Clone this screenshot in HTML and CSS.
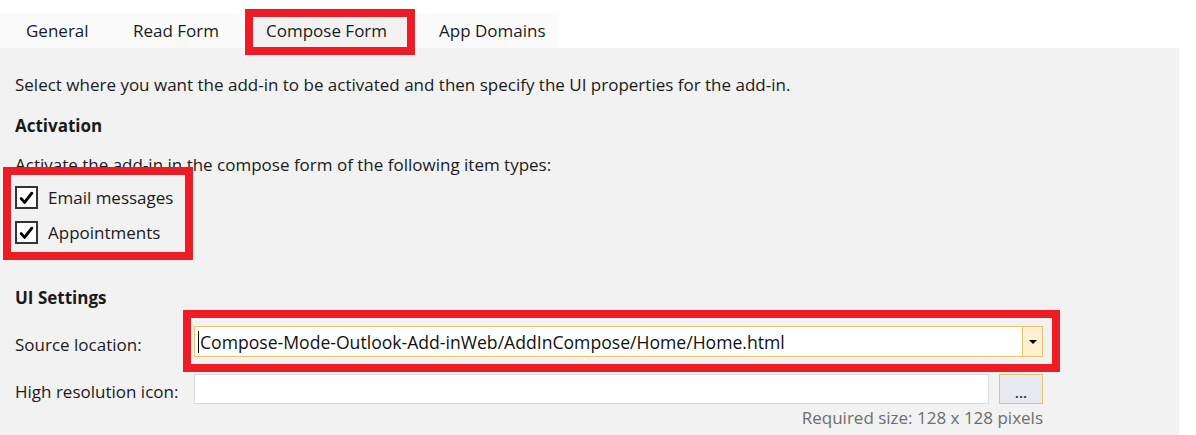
FILE: index.html
```html
<!DOCTYPE html>
<html>
<head>
<meta charset="utf-8">
<link rel="stylesheet" href="styles.css">
</head>
<body>
<div class="window">
  <div class="tabs">
    <div class="tab tab-general">General</div>
    <div class="tab tab-read">Read Form</div>
    <div class="tab tab-active">Compose Form</div>
    <div class="tab tab-domains">App Domains</div>
  </div>
  <div class="panel">
    <p class="intro">Select where you want the add-in to be activated and then specify the UI properties for the add-in.</p>
    <h3 class="heading heading-activation">Activation</h3>
    <p class="desc">Activate the add-in in the compose form of the following item types:</p>
    <div class="checks">
      <label class="check"><span class="box"><svg width="15" height="14" viewBox="0 0 15 14"><path d="M2.2 7.6 L5.6 11.4 L12.8 2.2" fill="none" stroke="#000" stroke-width="2.9" stroke-linecap="round" stroke-linejoin="round"/></svg></span>Email messages</label>
      <label class="check"><span class="box"><svg width="15" height="14" viewBox="0 0 15 14"><path d="M2.2 7.6 L5.6 11.4 L12.8 2.2" fill="none" stroke="#000" stroke-width="2.9" stroke-linecap="round" stroke-linejoin="round"/></svg></span>Appointments</label>
    </div>
    <h3 class="heading heading-ui">UI Settings</h3>
    <div class="form">
      <div class="label">Source location:</div>
      <div class="combo">
        <div class="combo-text"><span class="caret"></span>Compose-Mode-Outlook-Add-inWeb/AddInCompose/Home/Home.html</div>
        <div class="combo-btn"><span class="arrow"></span></div>
      </div>
      <div class="label label-icon">High resolution icon:</div>
      <div class="file-row">
        <div class="file-input"></div>
        <div class="browse">...</div>
      </div>
      <div></div>
      <div class="hint">Required size: 128 x 128 pixels</div>
    </div>
  </div>
</div>
</body>
</html>
```

FILE: styles.css
```css
*, *::before, *::after { box-sizing: border-box; }
html, body {
  margin: 0;
  padding: 0;
  background: #ffffff;
}
body {
  font-family: "Open Sans", "Noto Sans", sans-serif;
  font-size: 17px;
  color: #1a1a1a;
}
.window {
  width: 1179px;
  padding-top: 13px;
}
.tabs {
  display: flex;
  width: 559px;
  height: 35px;
  background: #fbfbfb;
}
.tab {
  flex: none;
  display: flex;
  align-items: center;
  height: 35px;
  white-space: nowrap;
}
.tab-general { width: 105px; padding-left: 26px; }
.tab-read { width: 140px; padding-left: 28px; }
.tab-active {
  position: relative;
  width: 170px;
  padding-left: 21px;
  background: #f2f2f2;
}
.tab-domains { width: 144px; padding-left: 24px; }
.tab-active::after {
  content: "";
  position: absolute;
  left: 0;
  right: 0;
  top: -4px;
  bottom: -7px;
  border: 8px solid #ed1c24;
}
.panel {
  background: #f2f2f2;
  height: 387px;
  padding: 25px 0 0 15px;
}
.intro, .desc, .heading {
  margin: 0;
  line-height: 24px;
  white-space: nowrap;
}
.heading {
  font-size: 17px;
  font-weight: 700;
}
.heading-activation { margin-top: 17px; }
.desc { margin-top: 15px; }
.checks {
  position: relative;
  margin-top: 9px;
  display: flex;
  flex-direction: column;
  gap: 12px;
  width: 170px;
}
.checks::before {
  content: "";
  position: absolute;
  left: -12px;
  top: -19px;
  width: 190px;
  height: 93px;
  border: 8px solid #ed1c24;
}
.check {
  display: flex;
  align-items: center;
  height: 23px;
  gap: 10px;
}
.box {
  width: 23px;
  height: 23px;
  border: 2px solid #333333;
  background: #ffffff;
  display: flex;
  align-items: center;
  justify-content: center;
}
.heading-ui { margin-top: 42px; }
.form {
  margin-top: 16px;
  display: grid;
  grid-template-columns: 179px 849px;
  row-gap: 17px;
}
.label {
  line-height: 24px;
  align-self: end;
  white-space: nowrap;
}
.combo {
  position: relative;
  height: 31px;
  display: flex;
  border: 1px solid #e8c36b;
  background: #ffffff;
}
.combo::after {
  content: "";
  position: absolute;
  left: -12px;
  right: -18px;
  top: -17px;
  bottom: -16px;
  border: 8px solid #ed1c24;
}
.combo-text {
  flex: 1;
  display: flex;
  align-items: center;
  padding-left: 3px;
  font-size: 17.6px;
  color: #111111;
  white-space: nowrap;
}
.caret {
  width: 1px;
  height: 22px;
  background: #000;
  margin-right: 1px;
}
.combo-btn {
  width: 20px;
  border-left: 1px solid #e8c36b;
  background: #fff0cf;
  display: flex;
  align-items: center;
  justify-content: center;
}
.arrow {
  width: 0;
  height: 0;
  border-left: 4px solid transparent;
  border-right: 4px solid transparent;
  border-top: 4px solid #000;
}
.file-row {
  display: flex;
  gap: 10px;
  height: 30px;
}
.file-input {
  flex: 1;
  background: #ffffff;
  border: 1px solid #d9dce4;
}
.browse {
  width: 44px;
  background: #e9e9f1;
  border: 1px solid #e8c36b;
  display: flex;
  align-items: center;
  justify-content: center;
  font-size: 15px;
  font-weight: 600;
  color: #1e2a55;
  padding-top: 5px;
}
.hint {
  margin-top: -15px;
  text-align: right;
  line-height: 24px;
  color: #6d6d6d;
  white-space: nowrap;
}
```
